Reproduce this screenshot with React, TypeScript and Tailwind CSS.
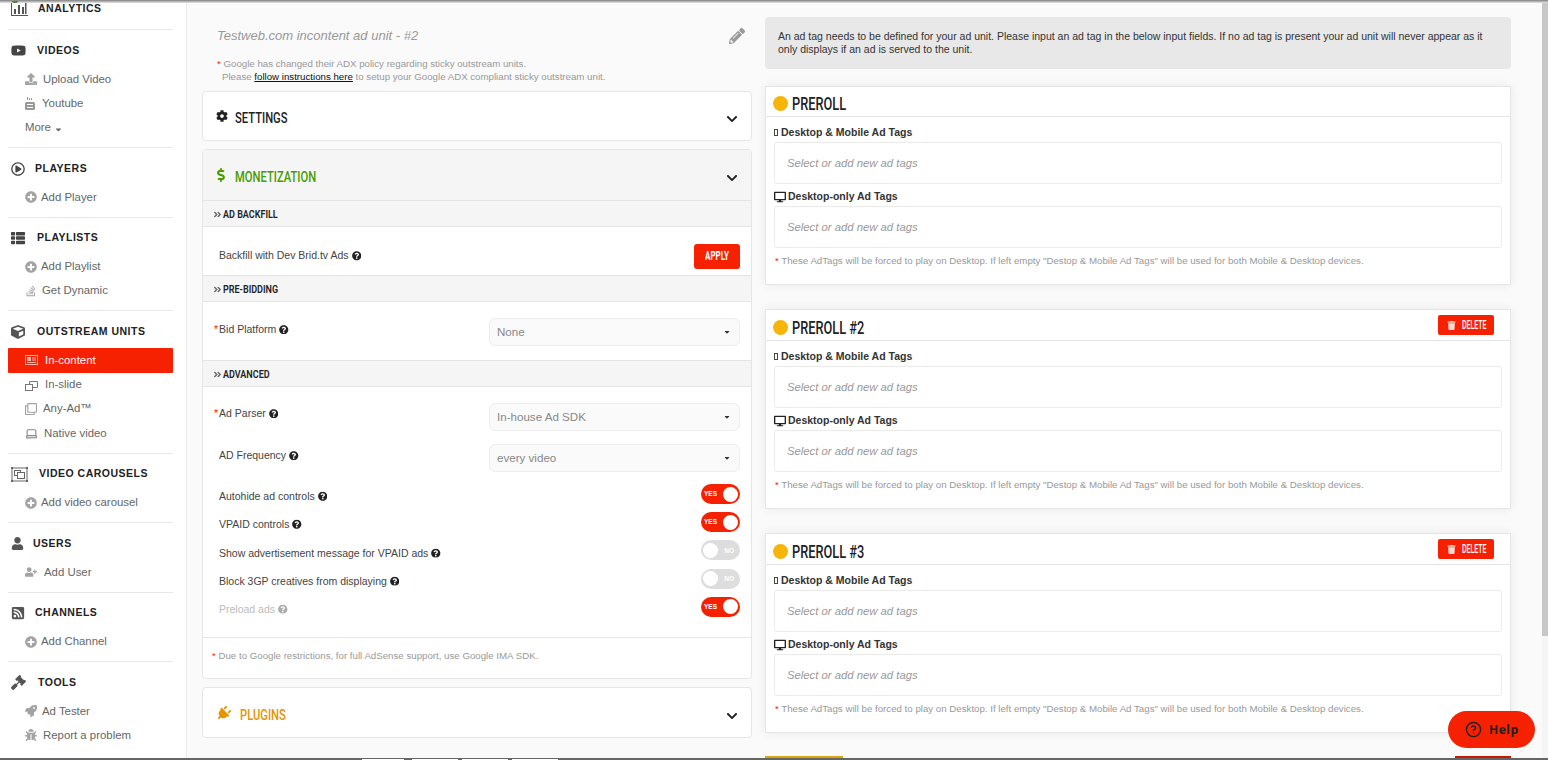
import type { ReactNode } from "react";
import {
  FaAngleDoubleRight,
  FaBug,
  FaCaretDown,
  FaChevronDown,
  FaCog,
  FaCube,
  FaDesktop,
  FaDollarSign,
  FaGavel,
  FaPencilAlt,
  FaPlug,
  FaPlusCircle,
  FaQuestionCircle,
  FaRegClone,
  FaRegPlayCircle,
  FaRocket,
  FaRssSquare,
  FaStackOverflow,
  FaThList,
  FaTrash,
  FaUpload,
  FaUser,
  FaUserPlus,
  FaYoutube,
} from "react-icons/fa";
import { CircleHelp, Laptop } from "lucide-react";

const BarsIcon = () => (
  <svg width="17" height="14" viewBox="0 0 17 14" fill="#555">
    <path d="M0 0h1v13h16v1H0z" />
    <path d="M3 7h2v5H3zM7 3h2v9H7zM11 5h2v7h-2zM14 1h1.500v11H14z" />
  </svg>
);

const TubeIcon = () => (
  <svg width="10" height="13" viewBox="0 0 10 13" fill="#999">
    <path d="M2 0h1v3H2zM4 1h1v2H4zM6 1h1v2H6z" />
    <rect x="0" y="5" width="10" height="8" rx="1.500" />
    <path d="M2 7h6v1H2zM2 10h6v1H2z" fill="#fff" />
  </svg>
);

const CardIcon = () => (
  <svg width="13" height="10" viewBox="0 0 13 10" fill="none" stroke="#ffb3a6">
    <rect x="0.500" y="0.500" width="12" height="9" />
    <rect x="2.500" y="2.500" width="3" height="3" fill="#ffb3a6" />
    <path d="M7 3h4M7 5h4M2 7.500h9" />
  </svg>
);

const SlideIcon = () => (
  <svg width="13" height="12" viewBox="0 0 13 12" fill="none" stroke="#777">
    <rect x="0.500" y="5.500" width="7" height="6" />
    <path d="M4.500 5.500v-3h8v6h-5" />
  </svg>
);

const CarouselIcon = () => (
  <svg width="17" height="15" viewBox="0 0 17 15" fill="none" stroke="#666">
    <rect x="1" y="1" width="15" height="13" />
    <rect x="3.500" y="3.500" width="6" height="5" />
    <rect x="6.500" y="5.500" width="7" height="6" fill="#fff" />
    <path d="M0 0h2v2H0zM15 0h2v2h-2zM0 13h2v2H0zM15 13h2v2h-2z" fill="#666" stroke="none" />
  </svg>
);

type NavItem = { label: ReactNode; icon?: ReactNode; textX: string; active?: boolean };
type NavSection = { title: string; icon: ReactNode; textX: string; items: NavItem[] };

const grayIcon = "text-[12px] text-[#a3a3a3]";

const sections: NavSection[] = [
  {
    title: "VIDEOS",
    icon: <FaYoutube className="text-[15px] text-[#444]" />,
    textX: "ml-[37px]",
    items: [
      { label: "Upload Video", icon: <FaUpload className={grayIcon} />, textX: "ml-[43px]" },
      { label: "Youtube", icon: <TubeIcon />, textX: "ml-[42px]" },
      {
        label: (
          <span className="flex items-center gap-[3px]">
            More <FaCaretDown className="text-[9px] mt-[3px]" />
          </span>
        ),
        textX: "ml-[25px]",
      },
    ],
  },
  {
    title: "PLAYERS",
    icon: <FaRegPlayCircle className="text-[14px] text-[#444]" />,
    textX: "ml-[35px]",
    items: [{ label: "Add Player", icon: <FaPlusCircle className={grayIcon} />, textX: "ml-[41px]" }],
  },
  {
    title: "PLAYLISTS",
    icon: <FaThList className="text-[14px] text-[#444]" />,
    textX: "ml-[37px]",
    items: [
      { label: "Add Playlist", icon: <FaPlusCircle className={grayIcon} />, textX: "ml-[41px]" },
      { label: "Get Dynamic", icon: <FaStackOverflow className={grayIcon} />, textX: "ml-[42px]" },
    ],
  },
  {
    title: "OUTSTREAM UNITS",
    icon: <FaCube className="text-[14px] text-[#555]" />,
    textX: "ml-[37px]",
    items: [
      { label: "In-content", icon: <CardIcon />, textX: "ml-[45px]", active: true },
      { label: "In-slide", icon: <SlideIcon />, textX: "ml-[45px]" },
      { label: "Any-Ad™", icon: <FaRegClone className={grayIcon} />, textX: "ml-[43px]" },
      { label: "Native video", icon: <Laptop size={13} color="#888" />, textX: "ml-[44px]" },
    ],
  },
  {
    title: "VIDEO CAROUSELS",
    icon: <CarouselIcon />,
    textX: "ml-[39px]",
    items: [{ label: "Add video carousel", icon: <FaPlusCircle className={grayIcon} />, textX: "ml-[41px]" }],
  },
  {
    title: "USERS",
    icon: <FaUser className="text-[13px] text-[#555]" />,
    textX: "ml-[33px]",
    items: [{ label: "Add User", icon: <FaUserPlus className={grayIcon} />, textX: "ml-[44px]" }],
  },
  {
    title: "CHANNELS",
    icon: <FaRssSquare className="text-[14px] text-[#555]" />,
    textX: "ml-[35px]",
    items: [{ label: "Add Channel", icon: <FaPlusCircle className={grayIcon} />, textX: "ml-[41px]" }],
  },
  {
    title: "TOOLS",
    icon: <FaGavel className="text-[15px] text-[#555]" />,
    textX: "ml-[38px]",
    items: [
      { label: "Ad Tester", icon: <FaRocket className={grayIcon} />, textX: "ml-[42px]" },
      { label: "Report a problem", icon: <FaBug className={grayIcon} />, textX: "ml-[43px]" },
    ],
  },
];

function SectionHead({ icon, title, textX }: { icon: ReactNode; title: string; textX: string }) {
  return (
    <div className="relative flex items-center h-[33px]">
      <span className="absolute left-[3px] flex items-center">{icon}</span>
      <span className={`${textX} -translate-x-2 text-[10.500px] font-bold tracking-[0.5px] text-[#222]`}>{title}</span>
    </div>
  );
}

function Sidebar() {
  return (
    <aside className="w-[187px] shrink-0 h-[760px] overflow-hidden bg-white border-r border-[#ececec] pl-2 pr-[13px]">
      <div className="-mt-[11.500px] pt-1 pb-[3.500px] border-b border-[#e8e8e8]">
        <SectionHead icon={<BarsIcon />} title="ANALYTICS" textX="ml-[38px]" />
      </div>
      {sections.map((section) => (
        <div key={section.title} className="pt-1 pb-[7.250px] border-b border-[#e8e8e8] last:border-b-0">
          <SectionHead icon={section.icon} title={section.title} textX={section.textX} />
          {section.items.map((item, i) => (
            <div
              key={i}
              className={`relative flex items-center h-[24.250px] text-[11.400px] rounded-[1px] ${
                item.active ? "bg-[#f52100] text-white" : "text-[#666]"
              }`}
            >
              <span className="absolute left-[17px] flex items-center">{item.icon}</span>
              <span className={`${item.textX} -translate-x-2`}>{item.label}</span>
            </div>
          ))}
        </div>
      ))}
    </aside>
  );
}

const condensed = "font-['Roboto',sans-serif] inline-block whitespace-nowrap";

function Help({ faded }: { faded?: boolean }) {
  return <FaQuestionCircle className={`inline-block ml-[3px] -mt-[1px] text-[9.500px] ${faded ? "text-[#aaa]" : "text-[#222]"}`} />;
}

function AccordionHead({
  icon,
  title,
  color,
  textClass,
}: {
  icon: ReactNode;
  title: string;
  color: string;
  textClass: string;
}) {
  return (
    <div className="flex items-center h-[50px] pl-[13px] pr-[13px]">
      <span className="w-[19px] flex">{icon}</span>
      <span className={`${condensed} origin-left ${textClass} text-[14px] font-medium translate-y-[1.500px] scale-x-[0.8] ${color}`}>
        {title}
      </span>
      <FaChevronDown className="ml-auto text-[12px] text-[#222] translate-y-[3px]" />
    </div>
  );
}

function Bar({ title }: { title: string }) {
  return (
    <div className="flex items-center h-[27px] bg-[#f5f5f5] border-y border-[#e4e4e4] pl-[10px]">
      <FaAngleDoubleRight className="text-[9px] text-[#666] mr-[1px] translate-y-[1px]" />
      <span className={`${condensed} origin-left text-[11px] font-semibold text-[#222] translate-y-[2px] scale-x-[0.82]`}>{title}</span>
    </div>
  );
}

function SelectBox({ value }: { value: string }) {
  return (
    <div className="flex items-center justify-between w-[251px] h-[28px] pl-[7px] pr-2 rounded-[6px] bg-[#fafafa] border border-[#eeeeee] text-[11.600px] text-[#888]">
      {value}
      <FaCaretDown className="text-[8px] text-[#333]" />
    </div>
  );
}

function Toggle({ on }: { on: boolean }) {
  return on ? (
    <div className="flex items-center justify-between w-[39px] h-[20px] rounded-full bg-[#f52100] pl-[3px] pr-[2px]">
      <span className="text-[6.500px] font-bold text-white">YES</span>
      <span className="w-[15px] h-[15px] rounded-full bg-white" />
    </div>
  ) : (
    <div className="flex items-center justify-between w-[39px] h-[20px] rounded-full bg-[#dddddd] pl-[2px] pr-[6px]">
      <span className="w-[15px] h-[15px] rounded-full bg-white" />
      <span className="text-[6.500px] font-bold text-white">NO</span>
    </div>
  );
}

const toggles = [
  { label: "Autohide ad controls", on: true },
  { label: "VPAID controls", on: true },
  { label: "Show advertisement message for VPAID ads", on: false },
  { label: "Block 3GP creatives from displaying", on: false },
  { label: "Preload ads", on: true, faded: true },
];

function LeftColumn() {
  return (
    <div className="w-[550px] shrink-0 pt-[27px]">
      <div className="flex items-center justify-between h-[18px] pl-[15px] pr-[7px]">
        <span className="text-[13px] italic text-[#999]">Testweb.com incontent ad unit - #2</span>
        <FaPencilAlt className="text-[16px] text-[#999]" />
      </div>
      <div className="mt-3 pl-[15px] text-[9.700px] leading-[13px] text-[#999]">
        <p>
          <span className="text-[#f52100]">*</span> Google has changed their ADX policy regarding sticky outstream units.
        </p>
        <p className="pl-[5px]">
          Please{" "}
          <a href="#" className="text-[#111] underline">
            follow instructions here
          </a>{" "}
          to setup your Google ADX compliant sticky outstream unit.
        </p>
      </div>

      <div className="mt-2 h-[50px] bg-white border border-[#e6e6e6] rounded-[4px]">
        <div className="-mt-[1px]">
          <AccordionHead
            icon={<FaCog className="text-[12px] text-[#222]" />}
            title="SETTINGS"
            color="text-[#222]"
            textClass=""
          />
        </div>
      </div>

      <div className="mt-2 h-[530px] bg-white border border-[#e6e6e6] rounded-[4px] overflow-hidden">
        <div className="bg-[#f5f5f5]">
          <AccordionHead
            icon={<FaDollarSign className="text-[14px] text-[#4a9c00] -ml-[2px]" />}
            title="MONETIZATION"
            color="text-[#4a9c00]"
            textClass=""
          />
        </div>
        <Bar title="AD BACKFILL" />
        <div className="flex items-center justify-between h-[48px] pt-[10px] pl-4 pr-[11px] text-[10.500px] text-[#444]">
          <span>
            Backfill with Dev Brid.tv Ads
            <Help />
          </span>
          <button className="w-[46px] h-[25px] rounded-[3px] bg-[#f52100] text-white">
            <span className={`${condensed} origin-center text-[12px] font-bold scale-x-[0.66]`}>APPLY</span>
          </button>
        </div>
        <Bar title="PRE-BIDDING" />
        <div className="flex justify-between h-[58px] pt-4 pr-[11px] pl-[11px] text-[10.500px] text-[#444]">
          <span className="pt-[4px]">
            <span className="text-[#f52100] mr-[1px]">*</span>Bid Platform
            <Help />
          </span>
          <SelectBox value="None" />
        </div>
        <Bar title="ADVANCED" />
        <div className="flex justify-between pt-4 pr-[11px] pl-[11px] text-[10.500px] text-[#444]">
          <span className="pt-[3px]">
            <span className="text-[#f52100] mr-[1px]">*</span>Ad Parser
            <Help />
          </span>
          <SelectBox value="In-house Ad SDK" />
        </div>
        <div className="flex justify-between mt-[13px] pr-[11px] pl-4 text-[10.500px] text-[#444]">
          <span className="pt-[4px]">
            AD Frequency
            <Help />
          </span>
          <SelectBox value="every video" />
        </div>
        <div className="mt-2 pl-4 pr-[11px] pb-[16px] border-b border-[#e6e6e6]">
          {toggles.map((t) => (
            <div
              key={t.label}
              className={`flex items-center justify-between h-[28.200px] text-[10.500px] ${
                t.faded ? "text-[#bbb]" : "text-[#444]"
              }`}
            >
              <span className="translate-y-[2.500px]">
                {t.label}
                <Help faded={t.faded} />
              </span>
              <Toggle on={t.on} />
            </div>
          ))}
        </div>
        <p className="pl-[9px] pt-[11px] text-[9.700px] text-[#999]">
          <span className="text-[#f52100]">*</span> Due to Google restrictions, for full AdSense support, use Google IMA SDK.
        </p>
      </div>

      <div className="mt-2 h-[51px] bg-white border border-[#e6e6e6] rounded-[4px]">
        <AccordionHead
          icon={<FaPlug className="text-[15px] text-[#e59400] rotate-45" />}
          title="PLUGINS"
          color="text-[#e59400]"
          textClass="ml-[5px]"
        />
      </div>
    </div>
  );
}

function TagField({ label, icon }: { label: string; icon: ReactNode }) {
  return (
    <>
      <div className="flex items-center h-[15px] text-[10.500px] font-bold text-[#333]">
        {icon}
        {label}
      </div>
      <div className="flex items-center mt-[2px] h-[42px] pl-3 pt-[1px] bg-white border border-[#ececec] rounded-[3px] text-[11.300px] italic text-[#999]">
        Select or add new ad tags
      </div>
    </>
  );
}

function PrerollCard({ title, canDelete }: { title: string; canDelete?: boolean }) {
  return (
    <div className="bg-white border border-[#e6e6e6] shadow-[0_0_10px_rgba(0,0,0,0.07)] h-[200px] first:h-[199px] mb-6 group">
      <div className="flex items-center justify-between h-[31px] group-first:h-[30px] border-b border-[#e4e4e4] pl-[7px] pr-4">
        <div className="flex items-center gap-[4px] pt-[4px]">
          <span className="w-[15px] h-[15px] rounded-full bg-[#f7b50c]" />
          <span className={`${condensed} origin-left text-[18px] font-medium text-[#222] scale-x-[0.71]`}>{title}</span>
        </div>
        {canDelete && (
          <button className="flex items-center gap-[6px] w-[56px] h-[20px] pl-[9px] rounded-[2px] bg-[#f52100] text-white">
            <FaTrash className="text-[9px] text-[#ffd9d2]" />
            <span className={`${condensed} origin-left text-[12px] font-medium w-[23px] text-left scale-x-[0.58]`}>DELETE</span>
          </button>
        )}
      </div>
      <div className="pt-2 px-2">
        <TagField label="Desktop & Mobile Ad Tags" icon={<span className="w-[4px] h-[7px] border border-[#444] mr-[3px]" />} />
        <div className="mt-[5px]">
          <TagField label="Desktop-only Ad Tags" icon={<FaDesktop className="text-[12px] text-[#222] mr-[2px]" />} />
        </div>
        <p className="mt-[7px] pl-[1px] h-3 text-[9.700px] leading-3 text-[#999]">
          <span className="text-[#f52100]">*</span> These AdTags will be forced to play on Desktop. If left empty "Destop &amp; Mobile Ad Tags" will be used for both Mobile &amp; Desktop devices.
        </p>
      </div>
    </div>
  );
}

function RightColumn() {
  return (
    <div className="w-[746px] shrink-0 pt-[17px]">
      <div className="h-[52px] px-[13px] pt-[13px] bg-[#e8e8e8] rounded-[4px] text-[10.500px] leading-[13px] text-[#333]">
        An ad tag needs to be defined for your ad unit. Please input an ad tag in the below input fields. If no ad tag is present your ad unit will never appear as it only displays if an ad is served to the unit.
      </div>
      <div className="mt-[17px]">
        <PrerollCard title="PREROLL" />
        <PrerollCard title="PREROLL #2" canDelete />
        <PrerollCard title="PREROLL #3" canDelete />
        <div className="flex justify-between -mt-[1px]">
          <div className="w-[78px] h-[3px] bg-[#dba512]" />
          <div className="w-[56px] h-[3px] bg-[#c81a00]" />
        </div>
      </div>
    </div>
  );
}

export default function App() {
  return (
    <div className="relative flex h-[760px] overflow-hidden bg-[#fafafa] font-['Liberation_Sans',Arial,sans-serif]">
      <Sidebar />
      <main className="flex-1 flex gap-[13px] pl-[15px] overflow-hidden">
        <LeftColumn />
        <RightColumn />
      </main>
      <div className="w-[6px] shrink-0 bg-[#f5f5f5]">
        <div className="h-[636px] bg-[#c8c8c8]" />
      </div>

      {/* browser chrome edges that lie over the page */}
      <div className="absolute top-0 inset-x-0 h-[3px] bg-gradient-to-b from-[#808080] to-[#e8e8e8]" />
      <div className="absolute top-[1px] left-[12px] w-[6px] h-[2px] rounded-b-full bg-[#4a8a2a]" />
      <div className="absolute bottom-0 inset-x-0 flex h-[2px] bg-[#666]">
        <div className="w-[42px] h-[1px] mt-[1px] ml-[362px] bg-white" />
        <div className="w-[46px] h-[1px] mt-[1px] ml-2 bg-white" />
        <div className="w-[46px] h-[1px] mt-[1px] ml-1 bg-white" />
        <div className="w-[46px] h-[1px] mt-[1px] ml-1 bg-white" />
      </div>

      <button className="absolute left-[1448px] top-[711px] flex items-center gap-[7px] w-[87px] h-[37px] pl-[17px] rounded-full bg-[#f52100] text-[#222]">
        <CircleHelp size={17} strokeWidth={2} />
        <span className="font-['Open_Sans',sans-serif] text-[12px] font-bold tracking-[0.5px]">Help</span>
      </button>
    </div>
  );
}
